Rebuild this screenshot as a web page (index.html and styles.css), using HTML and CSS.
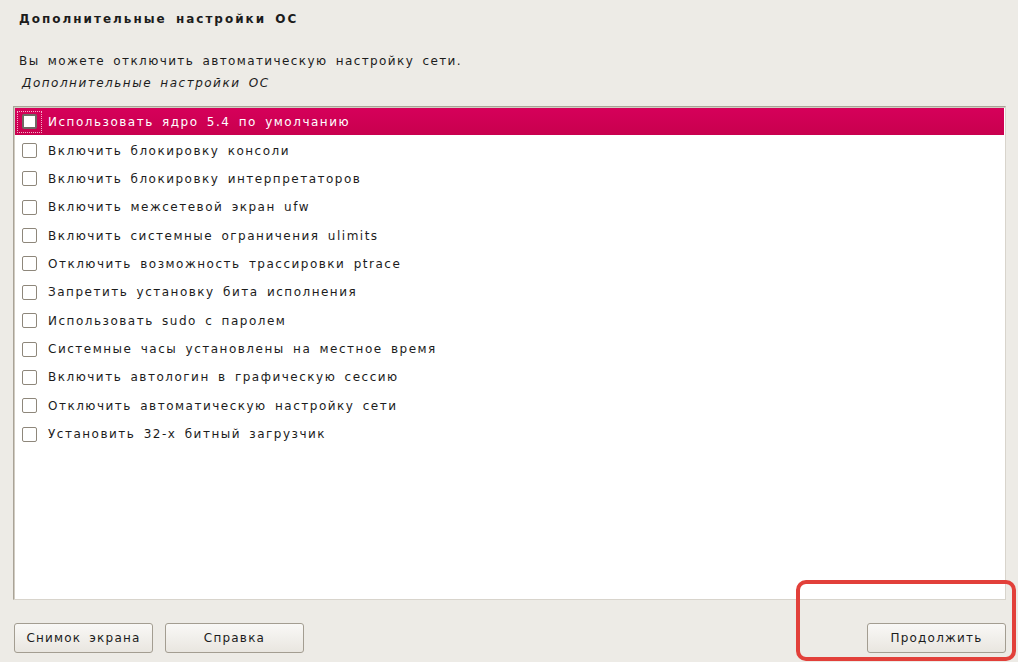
FILE: index.html
```html
<!DOCTYPE html>
<html lang="ru">
<head>
<meta charset="utf-8">
<title>Дополнительные настройки ОС</title>
<link rel="stylesheet" href="styles.css">
</head>
<body>
<div class="page">
  <h1 class="title">Дополнительные настройки ОС</h1>
  <p class="desc">Вы можете отключить автоматическую настройку сети.</p>
  <p class="label">Дополнительные настройки ОС</p>
  <div class="listbox">
    <div class="row selected"><span class="focus"><span class="check"></span></span><span class="text">Использовать ядро 5.4 по умолчанию</span></div>
    <div class="row"><span class="focus"><span class="check"></span></span><span class="text">Включить блокировку консоли</span></div>
    <div class="row"><span class="focus"><span class="check"></span></span><span class="text">Включить блокировку интерпретаторов</span></div>
    <div class="row"><span class="focus"><span class="check"></span></span><span class="text">Включить межсетевой экран ufw</span></div>
    <div class="row"><span class="focus"><span class="check"></span></span><span class="text">Включить системные ограничения ulimits</span></div>
    <div class="row"><span class="focus"><span class="check"></span></span><span class="text">Отключить возможность трассировки ptrace</span></div>
    <div class="row"><span class="focus"><span class="check"></span></span><span class="text">Запретить установку бита исполнения</span></div>
    <div class="row"><span class="focus"><span class="check"></span></span><span class="text">Использовать sudo с паролем</span></div>
    <div class="row"><span class="focus"><span class="check"></span></span><span class="text">Системные часы установлены на местное время</span></div>
    <div class="row"><span class="focus"><span class="check"></span></span><span class="text">Включить автологин в графическую сессию</span></div>
    <div class="row"><span class="focus"><span class="check"></span></span><span class="text">Отключить автоматическую настройку сети</span></div>
    <div class="row"><span class="focus"><span class="check"></span></span><span class="text">Установить 32-х битный загрузчик</span></div>
  </div>
  <div class="buttons">
    <button class="btn">Снимок экрана</button>
    <button class="btn">Справка</button>
    <span class="spacer"></span>
    <button class="btn">Продолжить</button>
  </div>
  <div class="highlight"></div>
</div>
</body>
</html>
```
FILE: styles.css
```css
html, body {
  margin: 0;
  padding: 0;
  background: #edebe6;
}
body {
  font-family: "DejaVu Sans", "Noto Sans", sans-serif;
  color: #1c1c1c;
  font-size: 12px;
  letter-spacing: 1.5px;
  word-spacing: 3px;
}
.page {
  position: relative;
  width: 1018px;
  height: 662px;
  display: flex;
  flex-direction: column;
  box-sizing: border-box;
  padding: 0 12px 0 13px;
}
.title {
  margin: 11px 0 0 6px;
  font-size: 12px;
  font-weight: bold;
  line-height: 16px;
  letter-spacing: 2px;
}
.desc {
  margin: 26px 0 0 6px;
  line-height: 16px;
  letter-spacing: 1.4px;
}
.label {
  margin: 6px 0 0 9px;
  font-style: italic;
  line-height: 16px;
}
.listbox {
  margin-top: 15px;
  height: 494px;
  box-sizing: border-box;
  background: #fff;
  border: 1px solid #a9a397;
  border-right-color: #d8d4cc;
  border-bottom-color: #d8d4cc;
  box-shadow: inset 1px 1px 0 #d1ccc2;
  padding: 1px;
}
.row {
  height: 28.36px;
  display: flex;
  align-items: center;
  padding-left: 2px;
}
.row.selected {
  background: linear-gradient(#d6005a, #c8004e);
  color: #fff;
  height: 27px;
  margin-bottom: 1.36px;
}
.focus {
  width: 25px;
  height: 22px;
  box-sizing: border-box;
  display: flex;
  align-items: center;
  justify-content: center;
  border: 1px dotted transparent;
}
.row.selected .focus {
  border-color: rgba(255, 235, 240, 0.75);
}
.check {
  width: 15px;
  height: 15px;
  box-sizing: border-box;
  border: 1px solid #8e877b;
  border-radius: 2px;
  background: #fff;
}
.row.selected .check {
  border: 2px solid #6e6a64;
}
.text {
  margin-left: 6px;
  white-space: nowrap;
}
.buttons {
  margin-top: 23px;
  display: flex;
  align-items: center;
  gap: 12px;
  padding-left: 1px;
}
.spacer {
  flex: 1;
}
.btn {
  width: 139px;
  height: 30px;
  font-family: "DejaVu Sans", "Noto Sans", sans-serif;
  font-size: 12px;
  letter-spacing: 1.2px;
  word-spacing: 3px;
  color: #1c1c1c;
  border: 1px solid #a39d91;
  border-radius: 3px;
  background: linear-gradient(#f9f8f6, #e9e6e0);
  padding: 0;
}
.highlight {
  position: absolute;
  left: 796px;
  top: 580px;
  width: 220px;
  height: 81px;
  box-sizing: border-box;
  border: 4px solid #e2403a;
  border-radius: 10px;
}
```
